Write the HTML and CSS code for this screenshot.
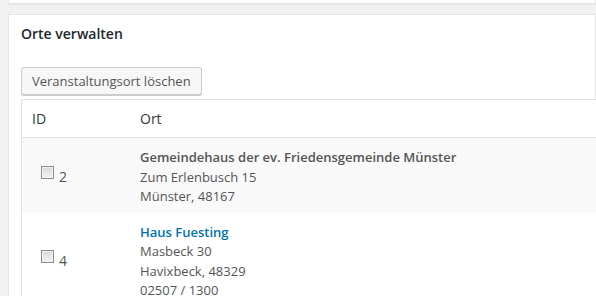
FILE: index.html
```html
<!DOCTYPE html>
<html lang="de">
<head>
<meta charset="utf-8">
<title>Orte verwalten</title>
<link rel="stylesheet" href="styles.css">
</head>
<body>
<div class="topbox"></div>
<div class="postbox">
  <h2 class="hndle">Orte verwalten</h2>
  <button class="button" type="button">Veranstaltungsort löschen</button>
  <table class="places">
    <thead>
      <tr>
        <th class="col-id">ID</th>
        <th class="col-ort">Ort</th>
      </tr>
    </thead>
    <tbody>
      <tr class="alt">
        <td class="cell-id"><input type="checkbox" class="cb"><span class="num">2</span></td>
        <td class="cell-ort">
          <strong class="title">Gemeindehaus der ev. Friedensgemeinde Münster</strong><br>
          Zum Erlenbusch 15<br>
          Münster, 48167
        </td>
      </tr>
      <tr>
        <td class="cell-id"><input type="checkbox" class="cb"><span class="num">4</span></td>
        <td class="cell-ort">
          <a class="title link" href="#">Haus Fuesting</a><br>
          Masbeck 30<br>
          Havixbeck, 48329<br>
          02507 / 1300
        </td>
      </tr>
    </tbody>
  </table>
</div>
</body>
</html>
```
FILE: styles.css
```css
html, body {
  margin: 0;
  height: 100%;
}
body {
  background: #f1f1f1;
  padding-left: 8px;
  overflow: hidden;
  font-family: "Open Sans", "Noto Sans", sans-serif;
  color: #555;
  font-size: 13px;
}
.topbox {
  height: 3px;
  background: #fff;
  border: 1px solid #e5e5e5;
  border-top: none;
  box-shadow: 0 1px 1px rgba(0, 0, 0, 0.04);
  margin-bottom: 10px;
}
.postbox {
  background: #fff;
  border: 1px solid #e5e5e5;
  box-shadow: 0 1px 1px rgba(0, 0, 0, 0.04);
  padding: 0 0 20px 12px;
}
.hndle {
  margin: 9px 0 0;
  font-size: 14px;
  font-weight: 600;
  line-height: 20px;
  color: #23282d;
}
.button {
  display: block;
  margin-top: 23px;
  height: 28px;
  padding: 0 10px 1px;
  font-family: inherit;
  font-size: 13px;
  line-height: 26px;
  color: #555;
  background: #f7f7f7;
  border: 1px solid #ccc;
  border-radius: 3px;
  box-shadow: 0 1px 0 #ccc;
  cursor: pointer;
}
.places {
  margin-top: 4px;
  width: 640px;
  border: 1px solid #e1e1e1;
  border-spacing: 0;
  border-collapse: separate;
  background: #fff;
}
.places th {
  text-align: left;
  font-weight: 400;
  font-size: 14px;
  line-height: 21px;
  color: #32373c;
  padding: 8px 10px;
  border-bottom: 1px solid #e1e1e1;
}
.col-id {
  width: 88px;
}
.places td {
  padding: 10px 10px 6px;
  line-height: 19.5px;
  font-size: 13px;
  color: #555;
  vertical-align: top;
}
.places tr.alt td {
  background: #f9f9f9;
}
.places td.cell-id {
  vertical-align: middle;
  padding-left: 19px;
  padding-top: 8px;
}
.cb {
  -webkit-appearance: none;
  appearance: none;
  width: 13px;
  height: 13px;
  margin: 0 5px 0 0;
  vertical-align: 3px;
  border: 1px solid #8e8e8e;
  background: linear-gradient(#d9d9d9, #f4f4f4);
  box-shadow: inset 0 0 0 1px #f2f2f2;
}
.num {
  font-size: 14px;
  line-height: 19px;
  color: #555;
}
.title {
  font-weight: 600;
  color: #555;
}
.link {
  color: #0073aa;
  text-decoration: none;
}
```
